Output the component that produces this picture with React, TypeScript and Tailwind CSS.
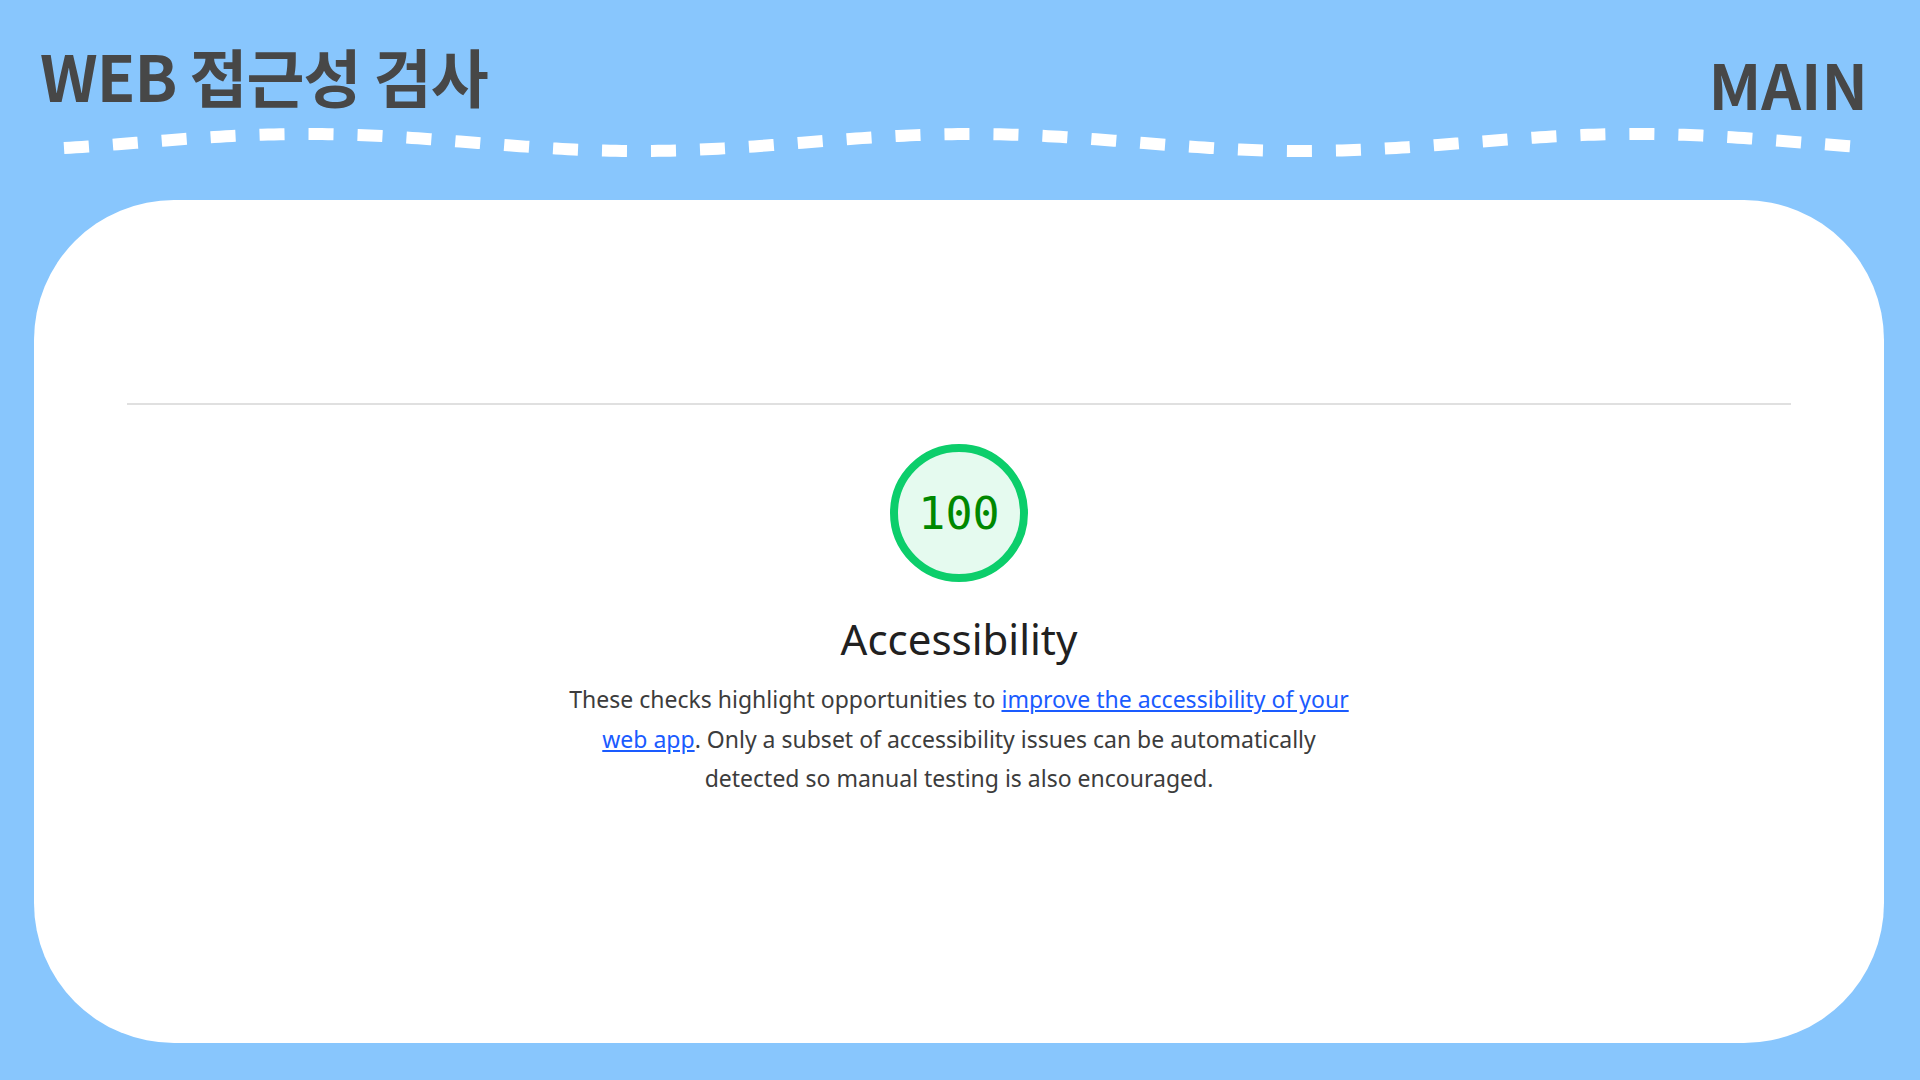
import React from 'react';

// wavy dashed line under the header
const wavePath = (() => {
  const pts: string[] = [];
  for (let x = 64; x <= 1853; x += 6) {
    const y = 142.5 - 8.5 * Math.cos(((x - 306) / 665) * Math.PI * 2);
    pts.push(`${pts.length === 0 ? 'M' : 'L'} ${x} ${y.toFixed(2)}`);
  }
  return pts.join(' ');
})();

function Gauge({ score }: { score: number }) {
  return (
    <div className="w-[138px] h-[138px] rounded-full border-[8px] border-[#0cce6b] bg-[#e5faef] flex items-center justify-center">
      <span className="text-[45px] leading-none text-[#008800] [font-family:'DejaVu_Sans_Mono',monospace]">
        {score}
      </span>
    </div>
  );
}

export default function App() {
  return (
    <div className="w-full h-screen bg-[#88c6fd] overflow-hidden [font-family:'Noto_Sans_CJK_KR','Noto_Sans',sans-serif]">
      {/* Header */}
      <header className="relative h-[200px]">
        <div className="flex justify-between items-start pl-[40px] pr-[52px]">
          <h1 className="pt-[43px] text-[63px] leading-none font-bold text-[#474747] tracking-[-1px]">
            WEB 접근성 검사
          </h1>
          <div className="pt-[52px] text-[62px] leading-none font-bold text-[#474747]">MAIN</div>
        </div>
        <svg
          className="absolute left-0 top-0"
          width="1920"
          height="200"
          viewBox="0 0 1920 200"
        >
          <path d={wavePath} fill="none" stroke="#ffffff" strokeWidth="12" strokeDasharray="25 24" />
        </svg>
      </header>

      {/* Card */}
      <div className="mx-[34px] w-[1850px] h-[843px] bg-white rounded-[140px] pt-[203px] px-[93px]">
        <div className="h-[2px] bg-[#e0e0e0]" />
        <div className="flex flex-col items-center pt-[39px]">
          <Gauge score={100} />
          <h2 className="mt-[29px] text-[42px] leading-[56px] text-[#212121] [font-family:'Noto_Sans',sans-serif]">
            Accessibility
          </h2>
          <p className="mt-[13px] text-center text-[23px] leading-[39.5px] text-[#3c3c3c] [font-family:'Noto_Sans',sans-serif]">
            These checks highlight opportunities to{' '}
            <a href="#" className="text-[#1a5bff] underline">
              improve the accessibility of your
            </a>
            <br />
            <a href="#" className="text-[#1a5bff] underline">
              web app
            </a>
            . Only a subset of accessibility issues can be automatically
            <br />
            detected so manual testing is also encouraged.
          </p>
        </div>
      </div>
    </div>
  );
}
